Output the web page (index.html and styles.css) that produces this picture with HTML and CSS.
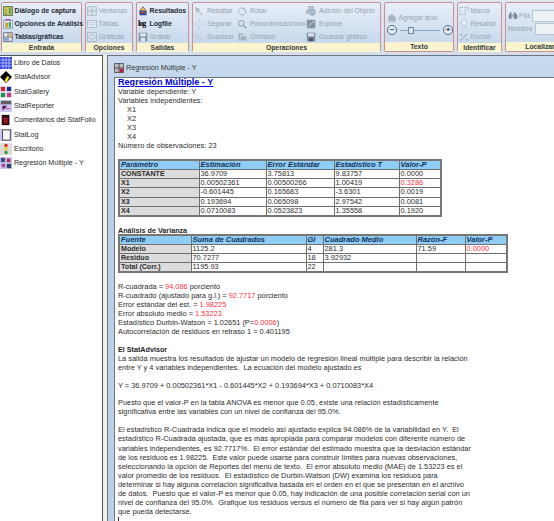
FILE: index.html
```html
<!DOCTYPE html>
<html lang="es">
<head>
    <meta charset="UTF-8">
    <title>Regresión Múltiple - Y</title>
    <link rel="stylesheet" href="styles.css">
</head>
<body>
    <div class="ribbon">
        <div class="group g-entrada">
            <div class="tools">
                <div class="tool"><svg viewBox="0 0 14 14"><rect x="1" y="1" width="12" height="12" fill="#e8d060" stroke="#3f6a40" stroke-width="1.4"/><path d="M3 5h3M3 8h3M3 11h3" stroke="#2a6a30"/><rect x="8" y="3" width="3" height="8" fill="#50a060"/></svg>Diálogo de captura</div>
                <div class="tool"><svg viewBox="0 0 14 14"><rect x="1" y="2" width="12" height="11" fill="#dfeef8" stroke="#6a8aa0"/><rect x="3" y="5" width="4" height="7" fill="#d0a030"/><rect x="8" y="4" width="3" height="8" fill="#40a050"/><path d="M3 1h8" stroke="#c03080" stroke-width="1.500"/></svg>Opciones de Análisis</div>
                <div class="tool"><svg viewBox="0 0 14 14"><rect x="1" y="1" width="12" height="12" fill="#e4e8ec" stroke="#556"/><path d="M7 1v12M1 7h12" stroke="#556"/><rect x="8" y="2" width="4" height="4" fill="#d8b060"/><rect x="2" y="8" width="4" height="4" fill="#6fa0d0"/></svg>Tablas/gráficas</div>
            </div>
            <div class="group-name">Entrada</div>
        </div>
        <div class="group g-opciones">
            <div class="tools off">
                <div class="tool"><svg viewBox="0 0 14 14"><rect x="1" y="1" width="12" height="12" fill="#d6e2ee" stroke="#9aa8b8"/><path d="M7 1v12M1 7h12" stroke="#9aa8b8"/></svg>Ventanas</div>
                <div class="tool"><svg viewBox="0 0 14 14"><rect x="1" y="2" width="12" height="10" fill="#e6eef4" stroke="#9aa8b8"/><path d="M3 5h8M3 8h8" stroke="#b0bcc8"/></svg>Tablas</div>
                <div class="tool"><svg viewBox="0 0 14 14"><rect x="1" y="1" width="12" height="12" fill="#d6e2ee" stroke="#9aa8b8"/><circle cx="7" cy="7" r="3.500" fill="none" stroke="#8a98a8" stroke-dasharray="2 1"/></svg>Gráficas</div>
            </div>
            <div class="group-name">Opciones</div>
        </div>
        <div class="group g-salidas">
            <div class="tools">
                <div class="tool"><svg viewBox="0 0 14 14"><rect x="2" y="6" width="10" height="7" fill="#2f4f88"/><path d="M3 6l4-5 4 5" fill="#e8c050" stroke="#804020"/><rect x="4" y="8" width="6" height="2" fill="#e04030"/></svg>Resultados</div>
                <div class="tool"><span class="log-icon">log</span>Logfile</div>
                <div class="tool off"><svg viewBox="0 0 14 14"><rect x="1" y="1" width="12" height="12" fill="#7c8a9a"/><rect x="3" y="2" width="8" height="4" fill="#e4ecf2"/><rect x="4" y="8" width="6" height="5" fill="#e4ecf2"/></svg>Grabar</div>
            </div>
            <div class="group-name">Salidas</div>
        </div>
        <div class="group g-operaciones">
            <div class="tools off op-grid">
                <div class="tool"><svg viewBox="0 0 14 14"><path d="M1 1l8 4-3 1 6 6-1 1-6-6-1 3z" fill="#a4b0bc"/></svg>Resaltar</div>
                <div class="tool"><svg viewBox="0 0 14 14"><path d="M2 9a5 5 0 0 1 9-4M12 5a5 5 0 0 1-9 5" fill="none" stroke="#a4b0bc" stroke-width="1.400"/><path d="M9 2v4h4z" fill="#a4b0bc"/></svg>Rotar</div>
                <div class="tool"><svg viewBox="0 0 14 14"><rect x="4" y="1" width="6" height="4" fill="#b8c4d0" stroke="#8a98a8"/><rect x="1" y="6" width="5" height="4" fill="#b8c4d0" stroke="#8a98a8"/><rect x="8" y="6" width="5" height="4" fill="#b8c4d0" stroke="#8a98a8"/><path d="M6 11h6v2H6z" fill="#7c8a9a"/></svg>Adición del Objeto</div>
                <div class="tool"><svg viewBox="0 0 14 14"><path d="M7 1v3M7 10v3M1 7h3M10 7h3" stroke="#8a98a8" stroke-width="1.500" stroke-dasharray="1 1"/></svg>Separar</div>
                <div class="tool"><svg viewBox="0 0 14 14"><circle cx="6" cy="6" r="4" fill="none" stroke="#7c8a9a" stroke-width="1.300"/><path d="M9 9l4 4" stroke="#7c8a9a" stroke-width="1.600"/></svg>Panorámica/zoom</div>
                <div class="tool"><svg viewBox="0 0 14 14"><rect x="1" y="1" width="12" height="12" fill="#7c8a9a"/><path d="M2 12L12 2" stroke="#d8e2ea"/></svg>Explore</div>
                <div class="tool"><svg viewBox="0 0 14 14"><path d="M1 3l12 9M3 12l9-10M1 8l5-5M8 13l5-5" stroke="#a4b0bc" stroke-dasharray="1 1"/></svg>Suavizar</div>
                <div class="tool"><svg viewBox="0 0 14 14"><path d="M2 2h6l2 2H4v8H2zM5 6h8v6H5z" fill="#a0acb8"/></svg>Omisión</div>
                <div class="tool"><svg viewBox="0 0 14 14"><rect x="1" y="1" width="12" height="12" fill="#7c8a9a"/><rect x="3" y="2" width="8" height="4" fill="#e4ecf2"/><rect x="4" y="8" width="6" height="5" fill="#445"/></svg>Guardar gráfico</div>
            </div>
            <div class="group-name">Operaciones</div>
        </div>
        <div class="group g-texto">
            <div class="texto-box off">
                <div class="tool"><svg viewBox="0 0 14 14"><path d="M2 12V4h3V2h4v3h3v7z" fill="#a0acb8"/></svg>Agregar texo</div>
                <div class="slider">
                    <span class="round">−</span>
                    <span class="track"><span class="thumb"></span></span>
                    <span class="round">+</span>
                </div>
            </div>
            <div class="group-name">Texto</div>
        </div>
        <div class="group g-identificar">
            <div class="tools off">
                <div class="tool"><svg viewBox="0 0 14 14"><rect x="1" y="2" width="8" height="10" fill="none" stroke="#8a98a8" stroke-dasharray="2 1"/><path d="M10 2h3v4" stroke="#8a98a8" fill="none"/></svg>Marca</div>
                <div class="tool"><svg viewBox="0 0 14 14"><path d="M7 1a4 4 0 0 1 2 7.500V11H5V8.500A4 4 0 0 1 7 1z" fill="#e8eef2" stroke="#b0bcc8"/></svg>Resaltar</div>
                <div class="tool"><svg viewBox="0 0 14 14"><path d="M2 12L12 2M2 4h3M3.500 2.500v3M9 11h4" stroke="#8a98a8" stroke-width="1.200"/></svg>Excluir</div>
            </div>
            <div class="group-name">Identificar</div>
        </div>
        <div class="group g-localizar">
            <div class="loc-box off">
                <div class="loc-row"><svg viewBox="0 0 14 14"><path d="M1 11V6l2-4h2v9zM8 11V2h2l3 4v5zM6 5h1v3H6z" fill="#6c7a88"/></svg>Fila<span class="field"></span></div>
                <div class="loc-row">Nombre<span class="field"></span></div>
            </div>
            <div class="group-name">Localizar</div>
        </div>
    </div>

    <div class="main">
        <div class="side">
            <div class="side-item"><svg viewBox="0 0 14 14"><rect width="14" height="14" fill="#3040e0"/><path d="M0 3.500h14M0 7h14M0 10.500h14M3.500 0v14M7 0v14M10.500 0v14" stroke="#b8c8f8"/></svg>Libro de Datos</div>
            <div class="side-item"><svg viewBox="0 0 14 14"><path d="M7 0l7 7-7 7-7-7z" fill="#000"/><path d="M5 12l3-6 3 1-3 6z" fill="#f0e020"/></svg>StatAdvisor</div>
            <div class="side-item"><svg viewBox="0 0 14 14"><rect width="14" height="14" fill="#e8e8f0"/><rect x="1" y="1" width="5" height="5" fill="#d02040"/><rect x="8" y="1" width="5" height="5" fill="#203080"/><rect x="1" y="8" width="5" height="5" fill="#209050"/><rect x="8" y="8" width="5" height="5" fill="#c04080"/></svg>StatGallery</div>
            <div class="side-item"><svg viewBox="0 0 14 14"><rect width="14" height="14" fill="#c8c8f0"/><rect x="1" y="1" width="12" height="4" fill="#606060"/><path d="M3 12V7h5M3 10h9" stroke="#c040a0"/></svg>StatReporter</div>
            <div class="side-item"><svg viewBox="0 0 14 14"><rect x="2" y="1" width="9" height="12" fill="#201018"/><rect x="4" y="4" width="5" height="7" fill="#a01020"/></svg>Comentarios del StatFolio</div>
            <div class="side-item"><svg viewBox="0 0 14 14"><rect width="14" height="14" fill="#c8c8f0"/><rect x="3" y="1" width="9" height="12" fill="#f4f4f4" stroke="#333"/></svg>StatLog</div>
            <div class="side-item"><svg viewBox="0 0 14 14"><rect width="14" height="14" fill="#dcdcdc"/><circle cx="7" cy="3" r="2" fill="#e03020"/><circle cx="7" cy="7" r="2" fill="#e8d020"/><circle cx="7" cy="11" r="2" fill="#30a040"/></svg>Escritorio</div>
            <div class="side-item"><svg viewBox="0 0 14 14"><rect width="14" height="14" fill="#c8c8e8"/><rect x="1" y="1" width="5" height="5" fill="#404890"/><rect x="8" y="2" width="4" height="4" fill="#b02050"/><rect x="2" y="8" width="4" height="4" fill="#b04090"/><rect x="8" y="8" width="5" height="5" fill="#304070"/></svg>Regresión Múltiple - Y</div>
        </div>
        <div class="desk">
            <div class="win">
                <div class="win-title"><svg viewBox="0 0 14 14"><rect width="14" height="14" fill="#bbb"/><path d="M.5.500h13v13H.5zM7 0v14M0 7h14" stroke="#333" fill="none"/><rect x="8" y="8" width="5" height="5" fill="#b02050"/></svg>Regresión Múltiple - Y</div>
                <div class="doc">
                    <h1>Regresión Múltiple - Y</h1>
                    <div class="head-info">
                        <p>Variable dependiente: Y<br>Variables independientes:</p>
                        <p class="vars">X1<br>X2<br>X3<br>X4</p>
                        <p>Número de observaciones: 23</p>
                    </div>

                    <table class="t-coef">
                        <tr><th>Parámetro</th><th>Estimación</th><th>Error Estándar</th><th>Estadístico T</th><th>Valor-P</th></tr>
                        <tr><td class="lab">CONSTANTE</td><td>36.9709</td><td>3.75813</td><td>9.83757</td><td>0.0000</td></tr>
                        <tr><td class="lab">X1</td><td>0.00502361</td><td>0.00500266</td><td>1.00419</td><td class="red">0.3286</td></tr>
                        <tr><td class="lab">X2</td><td>-0.601445</td><td>0.165683</td><td>-3.6301</td><td>0.0019</td></tr>
                        <tr><td class="lab">X3</td><td>0.193694</td><td>0.065098</td><td>2.97542</td><td>0.0081</td></tr>
                        <tr><td class="lab">X4</td><td>0.0710083</td><td>0.0523823</td><td>1.35558</td><td>0.1920</td></tr>
                    </table>

                    <h2 class="anova-title">Análisis de Varianza</h2>
                    <table class="t-anova">
                        <tr><th>Fuente</th><th>Suma de Cuadrados</th><th>Gl</th><th>Cuadrado Medio</th><th>Razón-F</th><th>Valor-P</th></tr>
                        <tr><td class="lab">Modelo</td><td>1125.2</td><td>4</td><td>281.3</td><td>71.59</td><td class="red">0.0000</td></tr>
                        <tr><td class="lab">Residuo</td><td>70.7277</td><td>18</td><td>3.92932</td><td></td><td></td></tr>
                        <tr><td class="lab">Total (Corr.)</td><td>1195.93</td><td>22</td><td></td><td></td><td></td></tr>
                    </table>

                    <p class="stats">R-cuadrada = <span class="red">94.086</span> porciento<br>
                    R-cuadrado (ajustado para g.l.) = <span class="red">92.7717</span> porciento<br>
                    Error estándar del est. = <span class="red">1.98225</span><br>
                    Error absoluto medio = <span class="red">1.53223</span><br>
                    Estadístico Durbin-Watson = 1.02651 (P=<span class="red">0.0006</span>)<br>
                    Autocorrelación de residuos en retraso 1 = 0.401195</p>

                    <h2 class="adv-title">El StatAdvisor</h2>
                    <p>La salida muestra los resultados de ajustar un modelo de regresión lineal múltiple para describir la relación<br>
                    entre Y y 4 variables independientes.&nbsp; La ecuación del modelo ajustado es</p>
                    <p class="para">Y = 36.9709 + 0.00502361*X1 - 0.601445*X2 + 0.193694*X3 + 0.0710083*X4</p>
                    <p class="para para-short">Puesto que el valor-P en la tabla ANOVA es menor que 0.05, existe una relación estadísticamente<br>
                    significativa entre las variables con un nivel de confianza del 95.0%.</p>
                    <p class="para">El estadístico R-Cuadrada indica que el modelo así ajustado explica 94.086% de la variabilidad en Y.&nbsp; El<br>
                    estadístico R-Cuadrada ajustada, que es más apropiada para comparar modelos con diferente número de<br>
                    variables independientes, es 92.7717%.&nbsp; El error estándar del estimado muestra que la desviación estándar<br>
                    de los residuos es 1.98225.&nbsp; Este valor puede usarse para construir límites para nuevas observaciones,<br>
                    seleccionando la opción de Reportes del menú de texto.&nbsp; El error absoluto medio (MAE) de 1.53223 es el<br>
                    valor promedio de los residuos.&nbsp; El estadístico de Durbin-Watson (DW) examina los residuos para<br>
                    determinar si hay alguna correlación significativa basada en el orden en el que se presentan en el archivo<br>
                    de datos.&nbsp; Puesto que el valor-P es menor que 0.05, hay indicación de una posible correlación serial con un<br>
                    nivel de confianza del 95.0%.&nbsp; Grafique los residuos versus el número de fila para ver si hay algún patrón<br>
                    que pueda detectarse.</p>
                    <div class="caret"></div>
                </div>
            </div>
        </div>
    </div>
</body>
</html>
```
FILE: styles.css
```css
html, body {
    height: 100%;
}

body {
    margin: 0;
    width: 554px;
    height: 521px;
    overflow: hidden;
    display: flex;
    flex-direction: column;
    font-family: "Liberation Sans", Arial, sans-serif;
    font-size: 7.400px;
    color: #2c2c2c;
    background-color: #fff;
}

/* ribbon */
.ribbon {
    height: 55px;
    flex: none;
    display: flex;
    gap: 3px;
    padding: 2px 0 0 1px;
    box-sizing: border-box;
    overflow: hidden;
    background: linear-gradient(#dfe7f0, #d3deea);
}

.group {
    height: 50px;
    flex: none;
    display: flex;
    flex-direction: column;
    box-sizing: border-box;
    border: 1px solid #cb8f95;
    border-radius: 2px;
    background: linear-gradient(#e6eef8, #c2d5ea);
}

.group-name {
    height: 9px;
    line-height: 9px;
    margin-top: auto;
    text-align: center;
    font-size: 6.800px;
    font-weight: bold;
    color: #33393f;
    background-color: #fbf5cf;
}

.g-entrada { width: 81px; }
.g-opciones { width: 48px; }
.g-salidas { width: 53px; }
.g-operaciones { width: 189px; }
.g-texto { width: 70px; }
.g-identificar { width: 45px; }
.g-localizar { width: 70px; }

.tools {
    display: flex;
    flex-direction: column;
    padding: 1px 0 0 1px;
}

.tool {
    height: 13px;
    display: flex;
    align-items: center;
    gap: 1.500px;
    white-space: nowrap;
    font-size: 6.800px;
    font-weight: bold;
    color: #1f2833;
}

.tool svg {
    width: 10px;
    height: 10px;
    flex: none;
}

.off .tool,
.tool.off,
.loc-box {
    color: #97a3af;
    font-size: 6.900px;
    font-weight: normal;
}

.off svg {
    opacity: 0.9;
}

.log-icon {
    width: 10px;
    font-size: 8px;
    font-weight: bold;
    font-family: "Liberation Serif", serif;
    color: #000;
    letter-spacing: -1px;
}

.op-grid {
    display: grid;
    grid-template-columns: 43px 69px 1fr;
}

.op-grid .tool {
    gap: 3px;
}

.texto-box {
    padding: 8px 0 0 2px;
}

.slider {
    display: flex;
    align-items: center;
    gap: 3px;
    margin-top: 1px;
}

.round {
    width: 8px;
    height: 8px;
    line-height: 7px;
    text-align: center;
    border: 1px solid #4f6a80;
    border-radius: 50%;
    font-size: 8px;
    font-weight: bold;
    color: #3c4e5e;
    background-color: #e6eef4;
}

.track {
    position: relative;
    width: 40px;
    height: 1px;
    background-color: #7fa4c8;
}

.thumb {
    position: absolute;
    left: 8px;
    top: -3px;
    width: 4px;
    height: 5px;
    border: 1px solid #6c8aa8;
    background-color: #dde8f2;
}

.loc-box {
    padding: 6px 0 0 2px;
}

.loc-row {
    height: 13px;
    display: flex;
    align-items: center;
    gap: 1px;
    white-space: nowrap;
}

.loc-row svg {
    width: 10px;
    height: 10px;
}

.field {
    width: 40px;
    height: 10px;
    margin-left: 1px;
    border: 1px solid #b8c4d0;
    background-color: #eef2f6;
}

/* lower part */
.main {
    flex: 1;
    min-height: 0;
    display: flex;
}

.side {
    width: 103px;
    flex: none;
    box-sizing: border-box;
    background-color: #fff;
    border-top: 1px solid #555;
    border-right: 1px solid #555;
}

.side-item {
    height: 14.300px;
    display: flex;
    align-items: center;
    gap: 2px;
    white-space: nowrap;
    font-size: 7.100px;
    color: #2b2b2b;
}

.side-item svg {
    width: 12px;
    height: 12px;
    flex: none;
}

.desk {
    flex: 1;
    min-width: 0;
    padding-left: 4px;
    background-color: #f1efe6;
}

.win {
    height: 100%;
    display: flex;
    flex-direction: column;
    box-sizing: border-box;
    border-left: 1px solid #6b7682;
    border-top: 1px solid #6b7682;
    background: linear-gradient(#c9dbee, #b9d0e8 60px);
    padding-left: 6px;
}

.win-title {
    height: 21px;
    flex: none;
    box-sizing: border-box;
    display: flex;
    align-items: center;
    gap: 2px;
    padding-top: 2px;
    font-size: 7.200px;
    color: #333;
}

.win-title svg {
    width: 10px;
    height: 10px;
}

.doc {
    flex: 1;
    min-height: 0;
    overflow: hidden;
    padding-left: 3px;
    background-color: #fff;
    border-top: 1px solid #6b7682;
    border-left: 1px solid #6b7682;
    line-height: 9.100px;
}

h1 {
    margin: 0;
    font-size: 9.100px;
    line-height: 9px;
    color: #0000e0;
    text-decoration: underline;
}

p {
    margin: 0;
}

.head-info {
    line-height: 9px;
}

.vars {
    padding-left: 9px;
}

/* tables */
table {
    border-collapse: collapse;
    table-layout: fixed;
    border: 2px solid #777;
}

th, td {
    height: 9.200px;
    padding: 0 0 0 1px;
    box-sizing: border-box;
    border: 1px solid #6f6f6f;
    text-align: left;
    font-size: 7.400px;
    line-height: 8px;
    white-space: nowrap;
    overflow: hidden;
}

th {
    font-size: 7.500px;
    font-style: italic;
    color: #12325a;
    background-color: #8fcdf5;
}

td.lab {
    font-size: 7.100px;
    font-weight: bold;
    background-color: #dcdcdc;
}

.red {
    color: #ff2f3f;
}

.t-coef {
    width: 324px;
    margin-top: 9px;
}

.t-coef th:nth-child(1) { width: 80px; }
.t-coef th:nth-child(2) { width: 67px; }
.t-coef th:nth-child(3) { width: 68px; }
.t-coef th:nth-child(4) { width: 65px; }

.t-anova {
    width: 390px;
}

.t-anova th:nth-child(1) { width: 72px; }
.t-anova th:nth-child(2) { width: 115px; }
.t-anova th:nth-child(3) { width: 17px; }
.t-anova th:nth-child(4) { width: 93px; }
.t-anova th:nth-child(5) { width: 49px; }

h2 {
    margin: 0;
    font-size: 7.200px;
    line-height: 9.100px;
    color: #1e1e1e;
}

.anova-title {
    margin-top: 10px;
    line-height: 7px;
}

.stats {
    margin-top: 8.400px;
}

.adv-title {
    margin-top: 8.500px;
}

.para {
    margin-top: 9.100px;
}

.para-short {
    margin-top: 8px;
}

.caret {
    width: 1px;
    height: 7px;
    margin-top: 1px;
    background-color: #333;
}
```
